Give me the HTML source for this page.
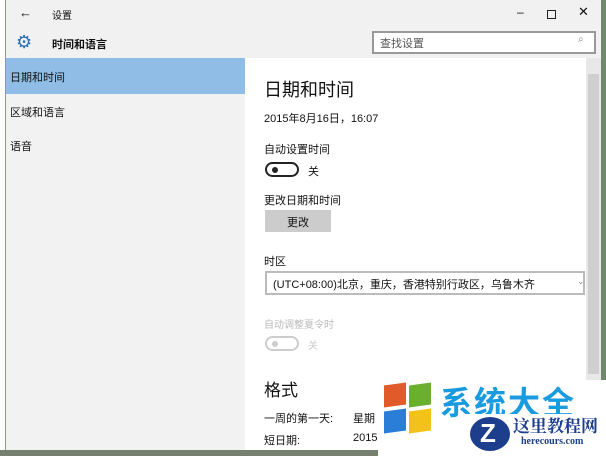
<!DOCTYPE html>
<html><head><meta charset="utf-8"><style>
*{margin:0;padding:0;box-sizing:border-box}
body{width:606px;height:456px;overflow:hidden;background:#fff;font-family:"Liberation Sans","Noto Sans CJK SC",sans-serif;color:#111;position:relative}
.rs{position:absolute;left:600px;top:0;width:6px;height:456px;background:#6f8a6a}
.bs{position:absolute;left:0;top:450px;width:606px;height:6px;background:#75806f}
.win{position:absolute;left:5px;top:0;width:595px;height:450px;background:#fff;border-left:1px solid #8aa080}
.hdr{position:absolute;left:0;top:0;width:595px;height:58px;background:#f1f1f1}
.side{position:absolute;left:0;top:58px;width:239px;height:392px;background:#f2f2f2}
.sel{position:absolute;left:0;top:0;width:239px;height:36px;background:#90bde6}
.t{position:absolute;white-space:nowrap}
.scroll{position:absolute;left:580px;top:58px;width:15px;height:392px;background:#e8e8e8}
.thumb{position:absolute;left:582px;top:74px;width:11px;height:300px;background:#cfcfcf}
.tog{position:absolute;width:34px;height:15px;border:2px solid #222;border-radius:8px}
.tog i{position:absolute;left:5px;top:3px;width:6px;height:6px;border-radius:50%;background:#222}
</style></head><body>
<div class="rs"></div><div class="bs"></div>
<div class="win">
 <div class="hdr">
  <div class="t" style="left:13px;top:5px;font-size:13px">←</div>
  <div class="t" style="left:46px;top:7px;font-size:10px">设置</div>
  <div class="t" style="left:511px;top:5px;font-size:12px">–</div>
  <div style="position:absolute;left:541px;top:10px;width:9px;height:9px;border:1px solid #222"></div>
  <div class="t" style="left:572px;top:4px;font-size:13px">✕</div>
  <div class="t" style="left:10px;top:32px;font-size:18px;color:#2a6fb5">⚙</div>
  <div class="t" style="left:46px;top:36px;font-size:11px;font-weight:bold">时间和语言</div>
  <div style="position:absolute;left:366px;top:31px;width:224px;height:23px;border:2px solid #999;background:#fff"></div>
  <div class="t" style="left:374px;top:35px;font-size:11px;color:#555">查找设置</div>
  <div class="t" style="left:572px;top:34px;font-size:10px;color:#888">⌕</div>
 </div>
 <div class="side">
  <div class="sel"></div>
  <div class="t" style="left:4px;top:11px;font-size:11px">日期和时间</div>
  <div class="t" style="left:4px;top:46px;font-size:11px">区域和语言</div>
  <div class="t" style="left:4px;top:80px;font-size:11px">语音</div>
 </div>
 <div class="scroll"></div><div class="thumb"></div>
 <div class="t" style="left:258px;top:76px;font-size:18px">日期和时间</div>
 <div class="t" style="left:258px;top:110px;font-size:11px">2015年8月16日，16:07</div>
 <div class="t" style="left:258px;top:141px;font-size:11px">自动设置时间</div>
 <div class="tog" style="left:259px;top:162px"><i></i></div>
 <div class="t" style="left:302px;top:163px;font-size:11px">关</div>
 <div class="t" style="left:258px;top:192px;font-size:11px">更改日期和时间</div>
 <div style="position:absolute;left:259px;top:210px;width:66px;height:22px;background:#ccc"></div>
 <div class="t" style="left:281px;top:214px;font-size:11px">更改</div>
 <div class="t" style="left:258px;top:253px;font-size:11px">时区</div>
 <div style="position:absolute;left:259px;top:271px;width:320px;height:24px;border:2px solid #bbb"></div>
 <div class="t" style="left:267px;top:276px;font-size:11px">(UTC+08:00)北京，重庆，香港特别行政区，乌鲁木齐</div>
 <div class="t" style="left:571px;top:276px;font-size:9px;color:#888">⌄</div>
 <div class="t" style="left:258px;top:316px;font-size:10px;color:#bbb">自动调整夏令时</div>
 <div class="tog" style="left:259px;top:336px;border-color:#ccc"><i style="background:#ccc"></i></div>
 <div class="t" style="left:302px;top:337px;font-size:10px;color:#ccc">关</div>
 <div class="t" style="left:258px;top:376px;font-size:17px">格式</div>
 <div class="t" style="left:258px;top:410px;font-size:11px">一周的第一天:</div>
 <div class="t" style="left:347px;top:410px;font-size:11px">星期</div>
 <div class="t" style="left:258px;top:432px;font-size:11px">短日期:</div>
 <div class="t" style="left:347px;top:432px;font-size:11px">2015</div>
</div>
<div style="position:absolute;left:378px;top:380px;width:228px;height:76px;background:#fff"></div>
<div style="position:absolute;left:384px;top:384px;width:22px;height:22px;background:#e05a2a;transform:skewY(-8deg)"></div>
<div style="position:absolute;left:409px;top:384px;width:22px;height:22px;background:#6ab02e;transform:skewY(-8deg)"></div>
<div style="position:absolute;left:384px;top:410px;width:22px;height:22px;background:#2a7ed8;transform:skewY(-8deg)"></div>
<div style="position:absolute;left:409px;top:410px;width:22px;height:22px;background:#f2c11a;transform:skewY(-8deg)"></div>
<div class="t" style="left:440px;top:378px;font-size:32px;font-weight:bold;color:#1a9be0;letter-spacing:2px">系统大全</div>
<div style="position:absolute;left:458px;top:414px;width:148px;height:42px;background:#fff"></div>
<div style="position:absolute;left:470px;top:417px;width:40px;height:34px;border-radius:50%;background:#1d3e8c"></div>
<div class="t" style="left:480px;top:418px;font-size:26px;font-weight:bold;color:#fff">Z</div>
<div class="t" style="left:513px;top:412px;font-size:17px;font-weight:bold;color:#1d3e8c;font-family:'Noto Serif CJK SC',serif">这里教程网</div>
<div class="t" style="left:521px;top:436px;font-size:10px;font-weight:bold;color:#1d3e8c;font-family:'Liberation Serif',serif">herecours.com</div>
</body></html>
